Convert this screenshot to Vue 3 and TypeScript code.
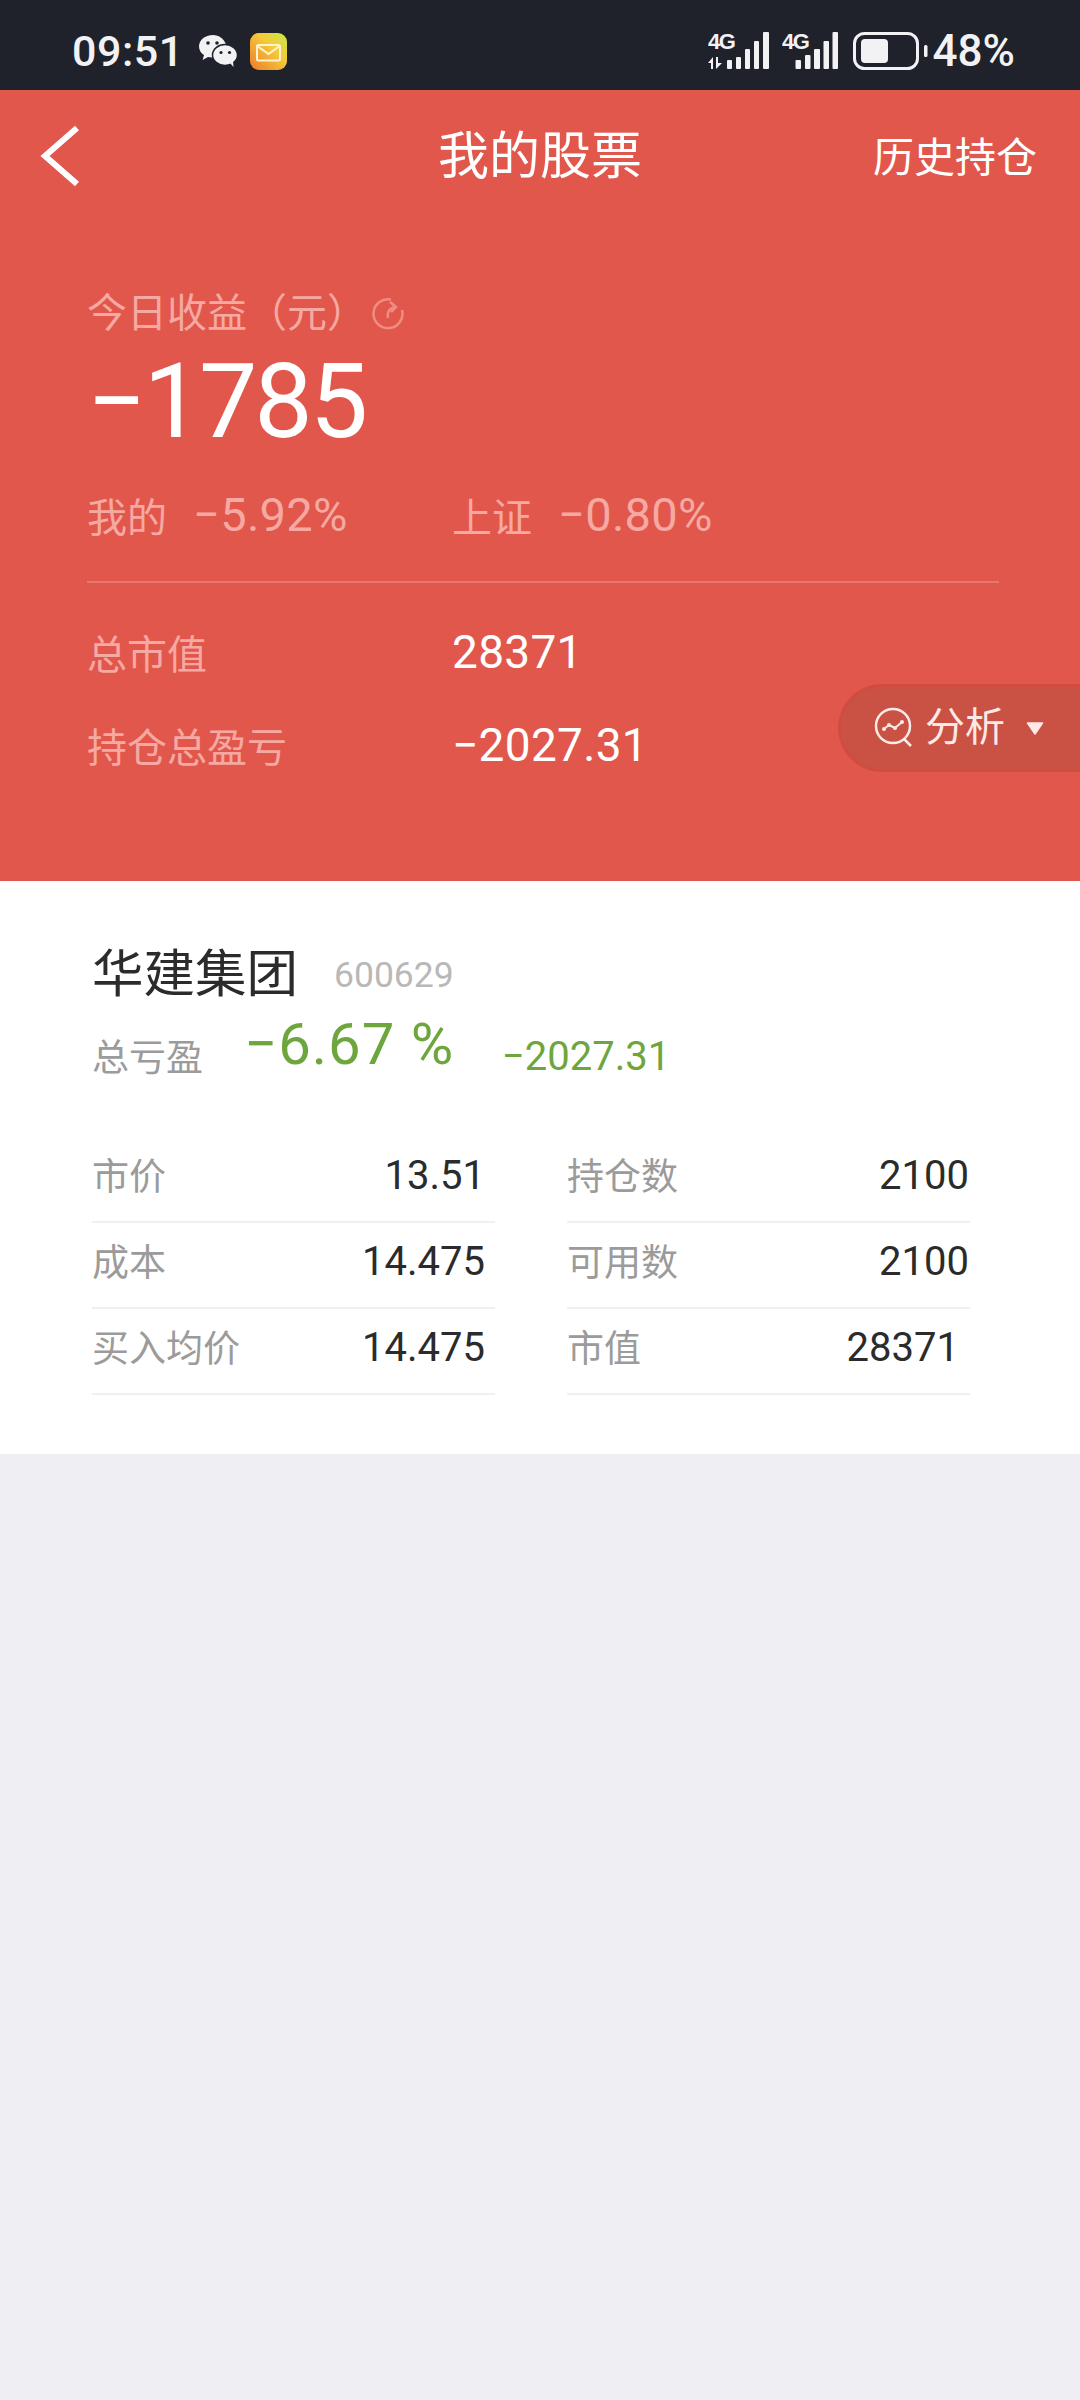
<script setup lang="ts">
interface Cell { label: string; value: string; pad: number }
const cells: Cell[] = [
  { label: '市价', value: '13.51', pad: 10 },
  { label: '持仓数', value: '2100', pad: 1 },
  { label: '成本', value: '14.475', pad: 10 },
  { label: '可用数', value: '2100', pad: 1 },
  { label: '买入均价', value: '14.475', pad: 10 },
  { label: '市值', value: '28371', pad: 11 },
]
</script>

<template>
  <div class="page">
    <div class="status">
      <div class="status-left">
        <span class="time">09:51</span>
        <svg class="wechat" width="40" height="34" viewBox="0 0 40 34">
          <path d="M15 1C7 1 1 6 1 12.5c0 3.6 2 6.6 5 8.6L4.6 26l5.4-3c1.2.3 2.6.5 4 .5.6 0 1.2 0 1.8-.1C15 19 19 11 28 10.6 26.2 5 21 1 15 1z" fill="#f2f2f4"/>
          <ellipse cx="27" cy="21" rx="12.5" ry="10.5" fill="#f2f2f4" stroke="#1f222b" stroke-width="1.5"/>
          <path d="M32 29l3.500 4-.5-6z" fill="#f2f2f4"/>
          <circle cx="10" cy="9" r="1.800" fill="#1f222b"/>
          <circle cx="19" cy="9" r="1.800" fill="#1f222b"/>
          <circle cx="23" cy="18.500" r="1.600" fill="#1f222b"/>
          <circle cx="31.500" cy="18.500" r="1.600" fill="#1f222b"/>
        </svg>
        <svg class="mail" width="37" height="37" viewBox="0 0 37 37">
          <defs>
            <linearGradient id="mailg" x1="1" y1="0" x2="0" y2="1">
              <stop offset="0" stop-color="#c9ea45"/>
              <stop offset="0.4" stop-color="#f5c93a"/>
              <stop offset="1" stop-color="#ee7a2a"/>
            </linearGradient>
          </defs>
          <rect width="37" height="37" rx="9" fill="url(#mailg)"/>
          <rect x="7" y="12" width="23" height="15.500" rx="1.500" fill="none" stroke="#fff4d0" stroke-width="2"/>
          <path d="M8 13.500l10.500 7.500L29 13.500" fill="none" stroke="#fff4d0" stroke-width="2"/>
        </svg>
      </div>
      <div class="status-right">
        <svg class="sig" width="62" height="42" viewBox="0 -4 62 42">
          <text x="0" y="17" class="net">4G</text>
          <path d="M0 31l5-6v12H3v-6zM8 25h2v6h4l-6 6z" fill="#f2f2f4"/>
          <rect x="19" y="28" width="5" height="9" rx="1" fill="#f2f2f4"/>
          <rect x="28" y="25" width="5" height="12" rx="1" fill="#f2f2f4"/>
          <rect x="37" y="17" width="5" height="20" rx="1" fill="#f2f2f4"/>
          <rect x="46" y="9" width="5" height="28" rx="1" fill="#f2f2f4"/>
          <rect x="55" y="0" width="6" height="37" rx="1" fill="#f2f2f4"/>
        </svg>
        <svg class="sig sig2" width="56" height="42" viewBox="0 -4 56 42">
          <text x="0" y="17" class="net">4G</text>
          <rect x="13.500" y="28" width="5.500" height="9" rx="1" fill="#f2f2f4"/>
          <rect x="23" y="23" width="5.500" height="14" rx="1" fill="#f2f2f4"/>
          <rect x="32" y="17" width="6" height="20" rx="1" fill="#f2f2f4"/>
          <rect x="41.500" y="9" width="5.500" height="28" rx="1" fill="#f2f2f4"/>
          <rect x="50.500" y="0" width="5.500" height="37" rx="1" fill="#f2f2f4"/>
        </svg>
        <svg class="battery" width="75" height="38" viewBox="0 0 75 38">
          <rect x="1.500" y="1.500" width="63" height="35" rx="10" fill="none" stroke="#f2f2f4" stroke-width="3"/>
          <rect x="8" y="7" width="27" height="24" rx="4" fill="#f2f2f4"/>
          <rect x="71" y="13" width="3.500" height="12" rx="1.500" fill="#f2f2f4"/>
        </svg>
        <span class="pct">48%</span>
      </div>
    </div>

    <section class="hero">
      <nav class="nav">
        <svg class="back" width="44" height="66" viewBox="0 0 44 66">
          <path d="M37 5L5 33l32 28" fill="none" stroke="#fff" stroke-width="6"/>
        </svg>
        <span class="title">我的股票</span>
        <span class="history">历史持仓</span>
      </nav>

      <div class="summary">
        <div class="today">
          <span>今日收益（元）</span>
          <svg class="refresh" width="34" height="34" viewBox="0 0 34 34">
            <path d="M20 3.500A14.500 14.500 0 1 0 31 14" fill="none" stroke="#f08c82" stroke-width="2.500"/>
            <path d="M17 22c-1-5 .5-9 6-11" fill="none" stroke="#f08c82" stroke-width="2.500"/>
            <path d="M19 6l6 5-5 5" fill="none" stroke="#f08c82" stroke-width="2.500"/>
          </svg>
        </div>
        <div class="big">−1785</div>
        <div class="stats">
          <div class="stat"><span class="stat-label">我的</span><span class="stat-value">−5.92%</span></div>
          <div class="stat"><span class="stat-label">上证</span><span class="stat-value">−0.80%</span></div>
        </div>
        <div class="rule"></div>
        <div class="line first">
          <span class="line-label">总市值</span><span class="line-value">28371</span>
        </div>
        <div class="line">
          <span class="line-label">持仓总盈亏</span><span class="line-value">−2027.31</span>
        </div>
      </div>

      <div class="analyse">
        <svg width="42" height="42" viewBox="0 0 42 42">
          <circle cx="19" cy="19" r="17" fill="none" stroke="#fde9e6" stroke-width="2.500"/>
          <path d="M30 32l7 7" stroke="#fde9e6" stroke-width="2.500"/>
          <path d="M10 22l5-4 6 3 7-6" fill="none" stroke="#fde9e6" stroke-width="2"/>
          <circle cx="10" cy="22" r="2" fill="#fde9e6"/>
          <circle cx="15" cy="18" r="2" fill="#fde9e6"/>
          <circle cx="21" cy="21" r="2" fill="#fde9e6"/>
          <circle cx="28" cy="15" r="2" fill="#fde9e6"/>
        </svg>
        <span class="analyse-text">分析</span>
        <svg width="18" height="13" viewBox="0 0 18 13">
          <path d="M1.500 1h15L9 12z" fill="#fde9e6" stroke="#fde9e6" stroke-width="1.500" stroke-linejoin="round"/>
        </svg>
      </div>
    </section>

    <section class="stock">
      <div class="name-row">
        <span class="name">华建集团</span>
        <span class="code">600629</span>
      </div>
      <div class="profit-row">
        <span class="profit-label">总亏盈</span>
        <span class="profit-pct">−6.67 %</span>
        <span class="profit-amt">−2027.31</span>
      </div>
      <div class="grid">
        <div v-for="c in cells" :key="c.label + c.value" class="cell">
          <span class="cell-label">{{ c.label }}</span>
          <span class="cell-value" :style="{ paddingRight: c.pad + 'px' }">{{ c.value }}</span>
        </div>
      </div>
    </section>
  </div>
</template>

<style scoped>
.page {
  width: 1080px;
  min-height: 2400px;
  background: #eeeef3;
  font-family: Roboto, "Noto Sans CJK SC", sans-serif;
  overflow: hidden;
}
.status {
  height: 90px;
  background: #1f222b;
  display: flex;
  justify-content: space-between;
  align-items: center;
  padding: 12px 65px 0 72px;
  box-sizing: border-box;
  color: #f2f2f4;
}
.status-left, .status-right { display: flex; align-items: center; }
.time { font-size: 43px; font-weight: 500; line-height: 50px; letter-spacing: .5px; }
.wechat { margin-left: 14px; }
.mail { margin-left: 12px; }
.status-right svg { display: block; }
.status-right .sig { margin-top: -4px; }
.net { font: 700 22px "Liberation Sans", sans-serif; fill: #f2f2f4; letter-spacing: -1.500px; }
.status-right .sig2 { margin-left: 12px; }
.battery { margin-left: 15px; }
.pct { font-size: 44px; font-weight: 500; line-height: 50px; margin-left: 5px; }

.hero {
  position: relative;
  height: 791px;
  background: #e2574c;
  color: #fff;
}
.nav {
  height: 132px;
  display: flex;
  align-items: center;
  justify-content: center;
  position: relative;
}
.back { position: absolute; left: 40px; top: 33px; }
.title { font-size: 51px; line-height: 60px; margin-top: 2px; }
.history { position: absolute; right: 43px; top: 43px; font-size: 41px; line-height: 50px; }
.summary { padding: 65px 81px 0 87px; }
.today { display: flex; align-items: center; height: 50px; font-size: 40px; color: #f5a9a2; margin-top: -2px; margin-bottom: 2px; }
.refresh { margin-left: 4px; margin-top: 6px; }
.big { font-size: 104px; line-height: 110px; margin-top: 12px; letter-spacing: -3px; }
.stats { display: grid; grid-template-columns: 365px 1fr; margin-top: 33px; color: #f5a9a2; height: 50px; align-items: center; }
.stat { display: flex; align-items: center; }
.stat-label { font-size: 40px; width: 106px; line-height: 50px; margin-top: 4px; }
.stat-value { font-size: 47px; line-height: 50px; margin-top: -4px; letter-spacing: .3px; }
.rule { height: 2px; background: rgba(255,255,255,.2); margin-top: 41px; }
.line { display: grid; grid-template-columns: 365px 1fr; height: 60px; align-items: center; margin-top: 33px; }
.line.first { margin-top: 40px; }
.line-label { font-size: 40px; color: #f5a9a2; margin-top: -2px; }
.line-value { font-size: 46px; margin-top: -2px; letter-spacing: .3px; }
.analyse {
  position: absolute;
  left: 838px;
  top: 594px;
  width: 242px;
  height: 88px;
  box-sizing: border-box;
  background: #c95245;
  border: 3px solid #d04c41;
  border-right: 0;
  border-radius: 44px 0 0 44px;
  display: flex;
  align-items: center;
  padding-left: 33px;
  color: #fde9e6;
}
.analyse-text { font-size: 40px; margin-left: 9px; margin-right: 21px; line-height: 50px; }

.stock { background: #fff; padding: 63px 110px 58px 92px; height: 573px; box-sizing: border-box; }
.name-row { display: flex; align-items: center; height: 60px; }
.name { font-size: 51.500px; color: #2b2b2b; line-height: 60px; margin-top: 2px; }
.code { font-size: 35.500px; color: #b8b8b8; margin-left: 36px; margin-top: 2px; }
.profit-row { display: flex; align-items: center; height: 60px; margin-top: 20px; }
.profit-label { font-size: 37px; color: #9b9b9b; width: 152px; margin-top: 2px; }
.profit-pct { font-size: 58px; color: #6ea63e; width: 258px; margin-top: -20px; letter-spacing: 1px; }
.profit-amt { font-size: 40px; color: #6ea63e; margin-top: 4px; }
.grid { display: grid; grid-template-columns: 403px 403px; column-gap: 72px; margin-top: 53px; }
.cell {
  height: 86px;
  box-sizing: border-box;
  padding-bottom: 10px;
  border-bottom: 2px solid #f0f0f0;
  display: flex;
  justify-content: space-between;
  align-items: center;
}
.cell-label { font-size: 37px; color: #9b9b9b; }
.cell-value { font-size: 40px; color: #2b2b2b; margin-top: 2px; }
</style>
